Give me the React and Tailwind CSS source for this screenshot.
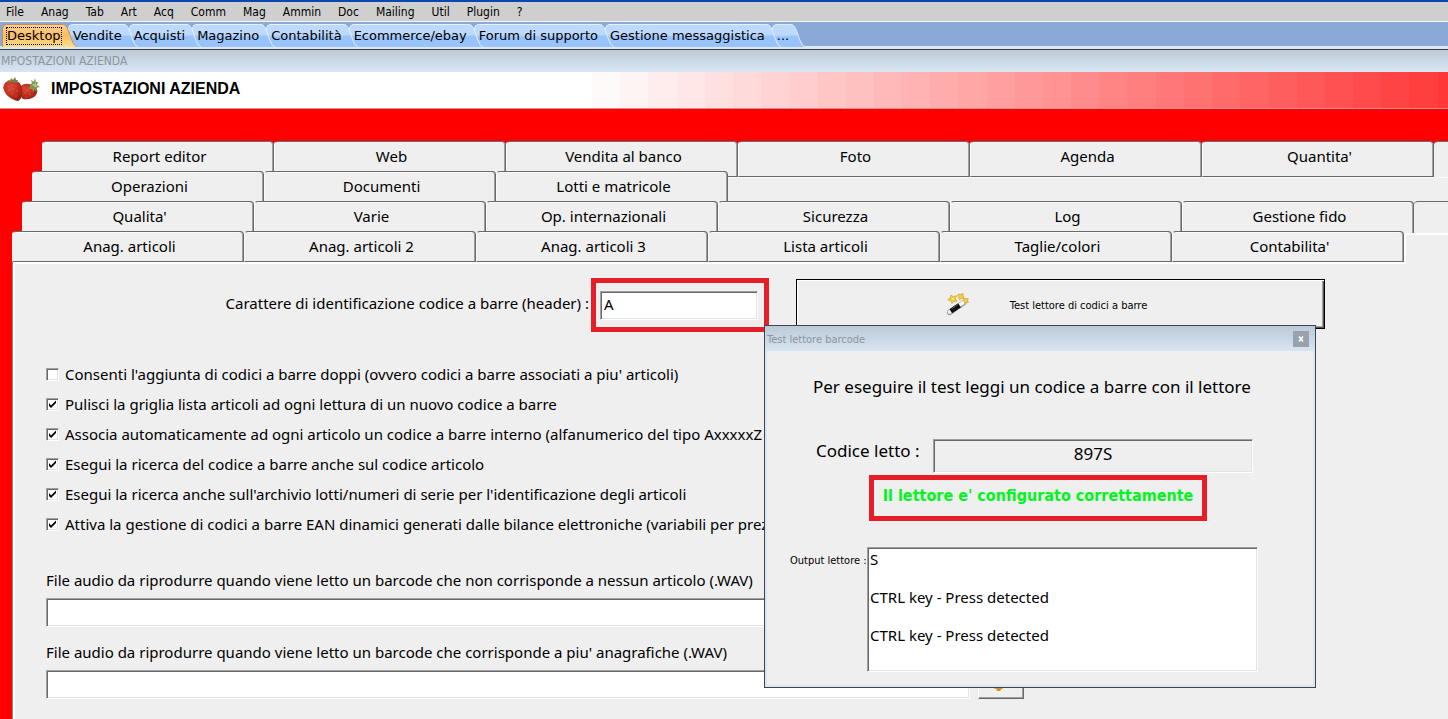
import React, { useState } from 'react';

const menuItems = ['File', 'Anag', 'Tab', 'Art', 'Acq', 'Comm', 'Mag', 'Ammin', 'Doc', 'Mailing', 'Util', 'Plugin', '?'];

const desktopTabs = [
  'Desktop',
  'Vendite',
  'Acquisti',
  'Magazino',
  'Contabilità',
  'Ecommerce/ebay',
  'Forum di supporto',
  'Gestione messaggistica',
  '...',
];

const options = [
  { id: 'doppi', label: "Consenti l'aggiunta di codici a barre doppi (ovvero codici a barre associati a piu' articoli)", checked: false },
  { id: 'pulisci', label: 'Pulisci la griglia lista articoli ad ogni lettura di un nuovo codice a barre', checked: true },
  { id: 'associa', label: 'Associa automaticamente ad ogni articolo un codice a barre interno (alfanumerico del tipo AxxxxxZ', checked: true },
  { id: 'ricerca', label: 'Esegui la ricerca del codice a barre anche sul codice articolo', checked: true },
  { id: 'lotti', label: "Esegui la ricerca anche sull'archivio lotti/numeri di serie per l'identificazione degli articoli", checked: true },
  { id: 'ean', label: 'Attiva la gestione di codici a barre EAN dinamici generati dalle bilance elettroniche (variabili per prezzo)', checked: true },
];

// Classic sunken 3D edge shared by text boxes
const sunken = 'border border-t-[#a0a0a0] border-l-[#a0a0a0] border-b-white border-r-white shadow-[inset_1px_1px_0_#696969,inset_-1px_-1px_0_#e3e3e3]';

const StrawberryIcon = () => (
  <svg width="38" height="26" viewBox="0 0 38 26" aria-hidden="true">
    <defs>
      <radialGradient id="berry" cx="0.4" cy="0.35" r="0.75">
        <stop offset="0" stopColor="#dc4a38" />
        <stop offset="0.6" stopColor="#b92a1c" />
        <stop offset="1" stopColor="#8c1f15" />
      </radialGradient>
    </defs>
    <path d="M18 9c3-3 9-3 13 0 4 2 4 6 2 9-2 3-7 5-13 4-4-3-5-9-2-13z" fill="url(#berry)" />
    <path d="M1 8c2-5 7-5 11-4 5 0 7 5 7 9 0 5 0 9-4 11C9 23 2 18 1 13c-1-2-1-3 0-5z" fill="url(#berry)" />
    <path d="M5 3l2 1 1-3 2 2 2-3 1 3 2 0-1 2 2 1-4 0-3-1-2 1-1-1-2 1z" fill="#7d7a45" />
    <path d="M27 8l2-2-1-3 3 2 1-4 1 4 2 0-1 3 3 2-4 1 1 3-3-1-1 2-1-3-3 0 1-3z" fill="#7d9a4c" />
    <path d="M29 7l3 0 1-3 0 4 3 1-4 1z" fill="#b5c98a" />
    <g fill="#e88a6c">
      <circle cx="5" cy="9" r=".5" /><circle cx="9" cy="8" r=".5" /><circle cx="13" cy="9" r=".5" />
      <circle cx="6" cy="13" r=".5" /><circle cx="10" cy="12" r=".5" /><circle cx="14" cy="14" r=".5" />
      <circle cx="9" cy="17" r=".5" /><circle cx="13" cy="19" r=".5" /><circle cx="21" cy="11" r=".5" />
      <circle cx="25" cy="13" r=".5" /><circle cx="22" cy="16" r=".5" /><circle cx="27" cy="17" r=".5" />
      <circle cx="23" cy="20" r=".5" />
    </g>
  </svg>
);

const WandIcon = () => (
  <svg width="24" height="24" viewBox="0 0 24 24" aria-hidden="true">
    <path d="M3.500 20.500L18 10.500" stroke="#9a9a9a" strokeWidth="5.200" strokeLinecap="round" />
    <path d="M3.500 20L18 10" stroke="#f4f4f4" strokeWidth="3.600" strokeLinecap="round" />
    <path d="M4.800 19.200L13.500 13.200" stroke="#111" strokeWidth="5" />
    <path d="M5.500 17L12 12.500" stroke="#555" strokeWidth="1" />
    <g fill="#f2ce4a" stroke="#d4a52a" strokeWidth=".8" strokeLinejoin="round">
      <path d="M5 3l2.300 1.700 3-.9-1 2.900 1.700 2.500-3 .1-2 2.200-1.300-2.900-3-.8 2.500-1.800z" />
      <path d="M12.500 2l2.200.6 2.300-1.100.1 2.500 1 2.200-2.600.3-1.900 1.300-.7-2.400-1.500-1.300z" />
      <path d="M18.500 6l1.500.9 2.200-.4-.6 1.900.7 1.900-2 0-1.600 1.200-.4-2-1.300-1.200z" />
    </g>
    <path d="M6.500 6l1 1.500" stroke="#fff3b0" strokeWidth="1.200" />
  </svg>
);

const MenuBar = () => (
  <nav className="flex h-[22px] items-center gap-[17px] border-t-2 border-b border-t-[#0a47ae] border-b-[#f4f6f8] bg-[#cfcfcf] pl-1.5 font-['DejaVu_Sans_Condensed','Noto_Sans',sans-serif] text-xs">
    {menuItems.map((item) => (
      <button key={item} type="button">{item}</button>
    ))}
  </nav>
);

const DesktopTab = ({ label, active, order, onSelect }) => (
  <button
    type="button"
    onClick={onSelect}
    className="relative flex h-[23px] whitespace-nowrap"
    style={{ zIndex: order }}
  >
    <span
      className={`flex h-full items-center rounded-tl-[5px] border-t border-l pl-[3px] ${
        active
          ? 'border-[#c98f4a] bg-linear-to-b from-[#fbcf94] via-[#fdbc62] to-[#fde08a]'
          : 'border-[#e4f0ff] bg-linear-to-b from-[#bdd9fb] from-45% to-[#98c4fb] to-55%'
      }`}
    >
      <span className={`relative z-10 border border-dotted leading-4 ${active ? 'border-black' : 'border-transparent'}`}>{label}</span>
    </span>
    <svg className="-mr-2.5 h-[23px] w-4" viewBox="0 0 16 23" aria-hidden="true">
      <defs>
        <linearGradient id={`edge${order}`} x1="0" y1="0" x2="0" y2="1">
          <stop offset={active ? '0' : '0.45'} stopColor={active ? '#fbcf94' : '#bdd9fb'} />
          <stop offset={active ? '0.5' : '0.55'} stopColor={active ? '#fdbc62' : '#98c4fb'} />
          <stop offset="1" stopColor={active ? '#fde08a' : '#98c4fb'} />
        </linearGradient>
      </defs>
      <path d="M0 0C4 0 5 3 7 8C9 14 11 21 15 23L0 23Z" fill={`url(#edge${order})`} />
      <path d="M0 .5C4 .5 5 3 7 8C9 14 11 21 15 23" fill="none" stroke={active ? '#c98f4a' : '#e4f0ff'} />
    </svg>
  </button>
);

const SettingsTab = ({ label, bottom }) => (
  <button
    type="button"
    className={`flex w-[232px] shrink-0 justify-center rounded-t-[4px] border border-t-[#696969] border-r-[#696969] border-l-[#fafafa] bg-[#efefef] pt-[3px] pl-[3px] leading-[22px] shadow-[inset_-1px_0_0_#a0a0a0,inset_0_1px_0_#fafafa] ${
      bottom ? 'border-b-[#696969]' : 'border-b-transparent'
    }`}
  >
    {label}
  </button>
);

const AudioField = ({ id, label }) => (
  <div className="mt-3.5">
    <label htmlFor={id} className="block leading-[22px]">{label}</label>
    <div className="mt-[7px] flex gap-2">
      <input id={id} type="text" className={`h-[29px] w-[924px] bg-white px-1 ${sunken}`} />
      <button
        type="button"
        aria-label="Sfoglia"
        className="flex h-[29px] w-[46px] items-center justify-center border border-t-white border-r-[#696969] border-b-[#696969] border-l-white pr-1 shadow-[inset_-1px_-1px_0_#a0a0a0]"
      >
        <svg width="16" height="12" viewBox="0 0 16 12" aria-hidden="true">
          <path d="M1 1h5l2 2h7l-3 6H3z" fill="#f2c94c" stroke="#a87c1a" />
          <path d="M5 9h6l-2 3H6z" fill="#c9961a" />
        </svg>
      </button>
    </div>
  </div>
);

const BarcodeDialog = ({ onClose }) => (
  <div
    role="dialog"
    aria-label="Test lettore barcode"
    className="absolute top-[325px] left-[764px] h-[363px] w-[552px] border border-[#3c4650] bg-[#efefef] shadow-[inset_0_0_0_2px_#dbe5ef]"
  >
    <div className="flex h-[25px] items-center justify-between bg-linear-to-b from-[#bccad8] to-[#d7e4f1] pr-1.5 pl-0.5 font-['DejaVu_Sans_Condensed','Noto_Sans',sans-serif] text-[11px] text-[#8d959e]">
      <span className="pt-1">Test lettore barcode</span>
      <button type="button" aria-label="Chiudi" onClick={onClose} className="flex size-4 items-center justify-center bg-[#98a2ac]">
        <svg width="6" height="6" viewBox="0 0 6 6" aria-hidden="true">
          <path d="M1 .5L5 5.500M5 .5L1 5.500" stroke="#fff" strokeWidth="1.600" />
        </svg>
      </button>
    </div>
    <p className="mt-6 ml-12 text-[17px] leading-6">Per eseguire il test leggi un codice a barre con il lettore</p>
    <div className="mt-10 ml-[51px] flex">
      <label htmlFor="codice" className="w-[117px] text-[17px] leading-6">Codice letto :</label>
      <input id="codice" type="text" readOnly value="897S" className={`h-[34px] w-80 bg-[#efefef] pb-1.5 text-center text-[17px] ${sunken}`} />
    </div>
    <p className="mt-0.5 ml-[104px] h-[46px] w-[338px] border-5 border-[#e61e28] pt-1 text-center font-['DejaVu_Sans_Condensed','Noto_Sans',sans-serif] text-base leading-6 font-bold text-[#00f51c]">
      Il lettore e' configurato correttamente
    </p>
    <div className="mt-[26px] ml-[25px] flex">
      <label htmlFor="output" className="w-[77px] pt-1.5 font-['DejaVu_Sans_Condensed','Noto_Sans',sans-serif] text-[11px] leading-4">Output lettore :</label>
      <textarea
        id="output"
        readOnly
        value={'S\n\nCTRL key - Press detected\n\nCTRL key - Press detected'}
        className={`h-[125px] w-[391px] resize-none bg-white px-0.5 py-0.5 leading-[19px] ${sunken}`}
      />
    </div>
  </div>
);

const App = () => {
  const [activeTab, setActiveTab] = useState('Desktop');
  const [header, setHeader] = useState('A');
  const [dialogOpen, setDialogOpen] = useState(true);

  return (
    <div className="relative flex min-h-screen flex-col overflow-hidden bg-[#ff0000] font-['Noto_Sans','Open_Sans',sans-serif] text-[15px] text-black">
      <MenuBar />

      {/* Desktop tabs */}
      <div className="flex h-7 items-start border-b border-[#3d3d3d] bg-[#8aa9d6] pt-0.5 pl-0.5 font-['DejaVu_Sans',Verdana,sans-serif] text-[13px] shadow-[inset_0_-3px_0_#dce8f8]">
        {desktopTabs.map((label, i) => (
          <DesktopTab
            key={label}
            label={label}
            active={label === activeTab}
            order={desktopTabs.length - i}
            onSelect={() => setActiveTab(label)}
          />
        ))}
      </div>

      {/* Window title */}
      <div className="flex h-[22px] items-center bg-linear-to-b from-[#bccad8] to-[#d9e5f2] pl-px font-['DejaVu_Sans_Condensed','Noto_Sans',sans-serif] text-xs text-[#8d959e]">
        MPOSTAZIONI AZIENDA
      </div>
      <header className="flex h-[37px] overflow-hidden border-b border-[#c89090] bg-white">
        <div className="flex w-[592px] shrink-0 items-center gap-2.5 pl-[3px]">
          <StrawberryIcon />
          <h1 className="pb-0.5 font-['Liberation_Sans',Arial,sans-serif] text-base font-bold">IMPOSTAZIONI AZIENDA</h1>
        </div>
        <div className="flex w-[874px] shrink-0">
          {Array.from({ length: 31 }, (_, i) => {
            const level = Math.round(250 - i * 6.5);
            return <div key={i} className="flex-1" style={{ backgroundColor: `rgb(255, ${level}, ${level})` }} />;
          })}
        </div>
      </header>

      <main className="flex flex-1 flex-col overflow-hidden pt-8 pl-3">
        {/* Each row sits over the foot of the one behind it */}
        <div className="-mb-1.5 flex h-9 shrink-0 pl-[30px]">
          {['Report editor', 'Web', 'Vendita al banco', 'Foto', 'Agenda', "Quantita'"].map((label) => (
            <SettingsTab key={label} label={label} bottom />
          ))}
          <div className="flex-1 rounded-tl-[4px] border-t border-[#696969] bg-[#efefef]" />
        </div>
        <div className="relative -mb-1.5 flex h-9 shrink-0 pl-5">
          {['Operazioni', 'Documenti', 'Lotti e matricole'].map((label) => (
            <SettingsTab key={label} label={label} />
          ))}
          <div className="mt-1.5 flex-1 border-t border-[#fafafa] bg-[#efefef]" />
        </div>
        <div className="relative -mb-1.5 flex h-9 shrink-0 pl-2.5">
          {["Qualita'", 'Varie', 'Op. internazionali', 'Sicurezza', 'Log', 'Gestione fido'].map((label) => (
            <SettingsTab key={label} label={label} />
          ))}
          <div className="flex-1 rounded-tl-[4px] border-t border-[#696969] bg-[#efefef]" />
        </div>
        <div className="relative z-10 flex h-[31px] shrink-0">
          {['Anag. articoli', 'Anag. articoli 2', 'Anag. articoli 3', 'Lista articoli', 'Taglie/colori', "Contabilita'"].map((label) => (
            <SettingsTab key={label} label={label} bottom />
          ))}
          <div className="mt-0.5 -mb-0.5 flex-1 rounded-tl-[4px] border-t-2 border-l-2 border-white bg-[#efefef]" />
        </div>

        <div className="relative flex-1 border-l border-[#8a8a8a] bg-[#efefef] pl-[33px] shadow-[inset_2px_2px_0_#fff]">
          <div className="flex pt-4">
            <label htmlFor="header" className="w-[545px] shrink-0 pt-3.5 pr-0.5 text-right leading-[22px]">
              Carattere di identificazione codice a barre (header) :
            </label>
            <div className="h-[54px] w-[178px] shrink-0 border-5 border-[#e61e28] px-1 py-2">
              <input
                id="header"
                type="text"
                value={header}
                onChange={(e) => setHeader(e.target.value)}
                className={`h-[29px] w-[158px] bg-white px-[3px] pb-1 ${sunken}`}
              />
            </div>
            <button
              type="button"
              onClick={() => setDialogOpen(true)}
              className="mt-px ml-[27px] flex h-[50px] w-[529px] shrink-0 items-center justify-center gap-10 border border-black pr-7 font-['DejaVu_Sans_Condensed','Noto_Sans',sans-serif] text-[11px] shadow-[inset_1px_1px_0_#fff,inset_-1px_-1px_0_#555,inset_-2px_-2px_0_#a0a0a0]"
            >
              <WandIcon />
              <span className="pt-1">Test lettore di codici a barre</span>
            </button>
          </div>

          <ul className="mt-[27px]">
            {options.map((option) => (
              <li key={option.id} className="flex h-[30px] items-center">
                <label className="flex items-center gap-1.5 whitespace-nowrap">
                  <span className="relative size-[13px]">
                    <input
                      type="checkbox"
                      name={option.id}
                      defaultChecked={option.checked}
                      className={`peer block size-[13px] appearance-none bg-white ${sunken}`}
                    />
                    <svg className="pointer-events-none absolute inset-0 hidden peer-checked:block" viewBox="0 0 13 13" aria-hidden="true">
                      <path d="M3 5v3l2 2 5-5V2.500l-5 5z" fill="#000" />
                    </svg>
                  </span>
                  {option.label}
                </label>
              </li>
            ))}
          </ul>

          <div className="pt-4">
            <AudioField id="audio-nessuno" label="File audio da riprodurre quando viene letto un barcode che non corrisponde a nessun articolo (.WAV)" />
            <AudioField id="audio-multipli" label="File audio da riprodurre quando viene letto un barcode che corrisponde a piu' anagrafiche (.WAV)" />
          </div>
        </div>
      </main>

      {dialogOpen && <BarcodeDialog onClose={() => setDialogOpen(false)} />}
    </div>
  );
};

export default App;
